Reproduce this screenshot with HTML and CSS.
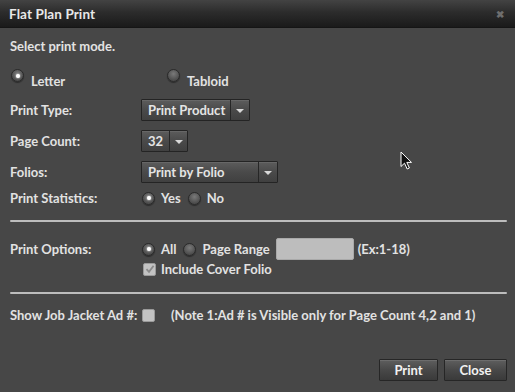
FILE: index.html
```html
<!DOCTYPE html>
<html>
<head>
<meta charset="utf-8">
<link rel="stylesheet" href="styles.css">
</head>
<body>
<div class="dialog">
  <div class="titlebar">
    <span class="title">Flat Plan Print</span>
    <span class="close">&#x2716;</span>
  </div>
  <div class="content">
    <div class="intro">Select print mode.</div>
    <div class="mode-row">
      <label class="opt mode-letter"><span class="radio on"></span><span class="lt">Letter</span></label>
      <label class="opt mode-tabloid"><span class="radio"></span><span class="lt">Tabloid</span></label>
    </div>
    <div class="row r-type">
      <div class="label">Print Type:</div>
      <div class="select w-type"><span class="sel-text">Print Product</span><span class="sel-arrow"></span></div>
    </div>
    <div class="row r-count">
      <div class="label">Page Count:</div>
      <div class="select w-count"><span class="sel-text">32</span><span class="sel-arrow"></span></div>
    </div>
    <div class="row r-folio">
      <div class="label">Folios:</div>
      <div class="select w-folio"><span class="sel-text">Print by Folio</span><span class="sel-arrow"></span></div>
    </div>
    <div class="row r-stats">
      <div class="label">Print Statistics:</div>
      <div class="radios">
        <span class="radio on"></span><span class="rt">Yes</span>
        <span class="radio"></span><span class="rt">No</span>
      </div>
    </div>
    <div class="divider d1"></div>
    <div class="row r-opts">
      <div class="label">Print Options:</div>
      <div class="radios">
        <span class="radio on"></span><span class="rt">All</span>
        <span class="radio"></span><span class="rt">Page Range</span>
        <span class="range-input"></span>
        <span class="hint">(Ex:1-18)</span>
      </div>
    </div>
    <div class="row r-cover">
      <div class="label"></div>
      <span class="checkbox checked"><svg width="10" height="10" viewBox="0 0 10 10"><path d="M1.5 5.2 L4 7.8 L8.6 1.8" fill="none" stroke="#8a8a8a" stroke-width="1.8"/></svg></span>
      <span class="ct">Include Cover Folio</span>
    </div>
    <div class="divider d2"></div>
    <div class="row r-job">
      <span class="job-label">Show Job Jacket Ad #:</span>
      <span class="checkbox"></span>
      <span class="note">(Note 1:Ad # is Visible only for Page Count 4,2 and 1)</span>
    </div>
    <div class="footer">
      <button class="btn b-print">Print</button>
      <button class="btn b-close">Close</button>
    </div>
  </div>
  <svg class="cursor" width="13" height="20" viewBox="0 0 13 20"><path d="M1 1 L1 15.5 L4.5 12.2 L7.2 18 L9.4 17 L6.8 11.4 L11.5 11.4 Z" fill="#111" stroke="#fff" stroke-width="1"/></svg>
</div>
</body>
</html>
```
FILE: styles.css
```css
* { box-sizing: border-box; }
html, body { margin: 0; padding: 0; background: #474747; }
body { font-family: Lato, "Open Sans", sans-serif; font-weight: 700; font-size: 13px; color: #e2e2e2; }
.dialog { position: relative; width: 515px; height: 392px; background: #474747; overflow: hidden; }
.titlebar {
  height: 28px; display: flex; align-items: center; justify-content: space-between;
  padding: 0 9px 0 9px;
  background: linear-gradient(#434343, #2c2c2c 45%, #1a1a1a);
  border-bottom: 1px solid #151515;
}
.title { font-size: 13.5px; color: #e8e8e8; letter-spacing: 0.1px; }
.close { font-size: 10px; color: #6e6e6e; margin-right: 2px; }
.content { padding: 0 8px 0 10px; }
.intro { margin-top: 10px; line-height: 16px; }
.mode-row { display: flex; margin-top: 15px; height: 16px; }
.opt { display: flex; align-items: flex-start; }
.mode-letter { width: 156px; margin-left: 1px; }
.opt .radio { margin-top: 0; }
.opt .lt { margin-left: 7px; line-height: 16px; margin-top: 4px; }
.radio {
  display: inline-block; width: 13px; height: 13px; border-radius: 50%;
  background: radial-gradient(circle at 50% 35%, #7a7a7a, #4d4d4d 70%);
  border: 1px solid #2a2a2a; box-shadow: 0 1px 1px rgba(0,0,0,0.4);
  position: relative; flex: none;
}
.radio.on::after {
  content: ""; position: absolute; left: 3.5px; top: 3.5px; width: 4px; height: 4px;
  border-radius: 50%; background: #fff; box-shadow: 0 0 2px #fff;
}
.row { display: flex; align-items: center; }
.label { width: 131px; flex: none; line-height: 16px; }
.r-type { margin-top: 14px; }
.r-count { margin-top: 9px; }
.r-folio { margin-top: 9px; }
.r-stats { margin-top: 7px; }
.select {
  display: flex; height: 22px; border: 1px solid #242424; border-radius: 1px;
  background: linear-gradient(#5c5c5c, #4a4a4a 50%, #404040);
  box-shadow: inset 0 1px 0 rgba(255,255,255,0.08);
}
.sel-text { flex: 1; padding-left: 6px; line-height: 20px; color: #e4e4e4; border-right: 1px solid #262626; }
.sel-arrow { width: 18px; flex: none; position: relative; }
.sel-arrow::after {
  content: ""; position: absolute; left: 5px; top: 9px;
  border-left: 4px solid transparent; border-right: 4px solid transparent; border-top: 4px solid #d8d8d8;
}
.w-type { width: 109px; }
.w-count { width: 47px; }
.w-count .sel-arrow { width: 17px; }
.w-folio { width: 137px; }
.radios { display: flex; align-items: center; }
.radios .radio { margin-left: 1px; }
.rt { margin-left: 6px; margin-right: 6px; line-height: 16px; }
.divider { height: 2px; background: #bdbdbd; margin-right: 0; border-radius: 1px; }
.d1 { margin-top: 14px; }
.r-opts { margin-top: 16px; height: 22px; }
.range-input { width: 78px; height: 22px; background: #bdbdbd; border: 1px solid #a9a9a9; border-radius: 2px; margin-left: 0; }
.hint { margin-left: 4px; }
.r-cover { margin-top: 2px; height: 14px; }
.checkbox {
  display: inline-flex; align-items: center; justify-content: center;
  width: 13px; height: 13px; background: #c3c3c3; border: 1px solid #9a9a9a; border-radius: 2px; flex: none;
}
.r-cover .checkbox { margin-left: 2px; }
.ct { margin-left: 5px; line-height: 16px; }
.d2 { margin-top: 16px; }
.r-job { margin-top: 13px; height: 16px; }
.job-label { width: 132px; flex: none; }
.note { margin-left: 16px; }
.footer { display: flex; justify-content: flex-end; gap: 6px; margin-top: 36px; }
.btn {
  height: 22px; font-family: inherit; font-weight: 700; font-size: 13px; color: #f2f2f2;
  border: 1px solid #262626; border-radius: 1px; padding: 0;
  background: linear-gradient(#5e5e5e, #484848 50%, #3a3a3a);
  box-shadow: inset 0 1px 0 rgba(255,255,255,0.1);
}
.b-print { width: 59px; }
.b-close { width: 63px; }
.cursor { position: absolute; left: 400px; top: 151px; }
```
